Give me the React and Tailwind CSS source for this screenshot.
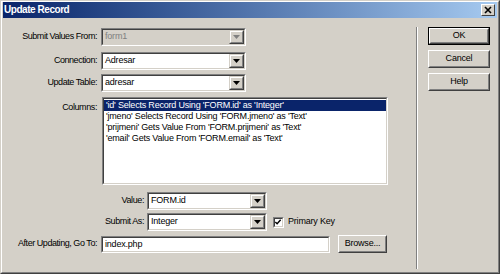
import * as React from 'react'

const FONT = { fontFamily: '"Liberation Sans", Arial, sans-serif' }

const columns = [
  "'id' Selects Record Using 'FORM.id' as 'Integer'",
  "'jmeno' Selects Record Using 'FORM.jmeno' as 'Text'",
  "'prijmeni' Gets Value From 'FORM.prijmeni' as 'Text'",
  "'email' Gets Value From 'FORM.email' as 'Text'",
]

export default function App() {
  return (
    <div
      style={FONT}
      className="h-[274px] w-[500px] border border-t-[#d4d0c8] border-l-[#d4d0c8] border-b-[#404040] border-r-[#404040] bg-[#d4d0c8] text-[9px] tracking-[-0.2px] text-black"
    >
      <div className="flex h-full flex-col border border-t-white border-l-white border-b-[#808080] border-r-[#808080] px-[1px]">
        <div className="flex h-[16px] shrink-0 items-center justify-between bg-gradient-to-r from-[#0a246a] to-[#a6caf0] pl-[1px] pr-[2px]">
          <span className="text-[10px] font-bold leading-none tracking-[-0.45px] text-white">Update Record</span>
          <CloseButton />
        </div>

        <div className="flex flex-1">
          <div className="w-[413px] pt-[10px]">
            <Row label="Submit Values From:">
              <Select value="form1" className="w-[145px]" disabled />
            </Row>
            <Row label="Connection:" className="mt-[6px]">
              <Select value="Adresar" className="w-[145px]" />
            </Row>
            <Row label="Update Table:" className="mt-[4px]">
              <Select value="adresar" className="w-[145px]" />
            </Row>

            <div className="mt-[5px] flex items-start">
              <span className="w-[94px] pt-[4px] text-right tracking-[-0.4px]">Columns:</span>
              <div className="ml-[5px] h-[88px] w-[286px] border border-t-[#808080] border-l-[#808080] border-b-white border-r-white">
                <div className="h-full border border-t-[#404040] border-l-[#404040] border-b-[#d4d0c8] border-r-[#d4d0c8] bg-white pt-[1px]">
                  {columns.map((text, i) => (
                    <div
                      key={text}
                      className={`h-[11px] whitespace-nowrap pl-[2px] leading-[11px] ${i === 0 ? 'bg-[#0a246a] text-white' : ''}`}
                    >
                      {text}
                    </div>
                  ))}
                </div>
              </div>
            </div>

            <div className="mt-[7px] flex items-center">
              <span className="w-[141px] text-right tracking-[-0.4px]">Value:</span>
              <Select value="FORM.id" className="ml-[3px] w-[120px]" />
            </div>
            <div className="mt-[3px] flex items-center">
              <span className="w-[141px] text-right tracking-[-0.4px]">Submit As:</span>
              <Select value="Integer" className="ml-[3px] w-[120px]" />
              <Checkbox />
              <span className="ml-[4px]">Primary Key</span>
            </div>

            <Row label="After Updating, Go To:" className="mt-[4px]">
              <Sunken className="h-[17px] w-[229px] bg-white">
                <span className="pl-[2px] leading-[13px]">index.php</span>
              </Sunken>
              <Button className="ml-[8px] w-[49px]">Browse...</Button>
            </Row>
          </div>

          <div className="mt-[9px] mb-[3px] w-[2px] border-l border-r border-l-[#808080] border-r-white" />

          <div className="ml-[10px] flex flex-col gap-[5px] pt-[9px]">
            <Button className="w-[62px]" isDefault>OK</Button>
            <Button className="w-[62px]">Cancel</Button>
            <Button className="w-[62px]">Help</Button>
          </div>
        </div>
      </div>
    </div>
  )
}

function Row({ label, className = '', children }) {
  return (
    <div className={`flex items-center ${className}`}>
      <span className="w-[94px] whitespace-nowrap text-right tracking-[-0.45px]">{label}</span>
      <div className="ml-[4px] flex items-center">{children}</div>
    </div>
  )
}

function Sunken({ className = '', children }) {
  return (
    <div className={`border border-t-[#808080] border-l-[#808080] border-b-white border-r-white ${className}`}>
      <div className="flex h-full items-center border border-t-[#404040] border-l-[#404040] border-b-[#d4d0c8] border-r-[#d4d0c8]">
        {children}
      </div>
    </div>
  )
}

function Select({ value, className = '', disabled }) {
  return (
    <Sunken className={`h-[18px] ${disabled ? 'bg-[#d4d0c8]' : 'bg-white'} ${className}`}>
      <span className={`flex-1 pl-[2px] ${disabled ? 'text-[#808080]' : ''}`}>{value}</span>
      <div className="h-full w-[15px] border border-t-[#d4d0c8] border-l-[#d4d0c8] border-b-[#404040] border-r-[#404040]">
        <div className="flex h-full items-center justify-center border border-t-white border-l-white border-b-[#808080] border-r-[#808080] bg-[#d4d0c8]">
          <svg width="7" height="4" viewBox="0 0 7 4">
            <path d="M0 0h7L3.5 4z" fill={disabled ? '#808080' : '#000'} />
          </svg>
        </div>
      </div>
    </Sunken>
  )
}

function Checkbox() {
  return (
    <Sunken className="ml-[6px] h-[11px] w-[11px] bg-white">
      <svg width="9" height="9" viewBox="0 0 9 9" className="-ml-[1px]">
        <path d="M1.5 4l2 2 4-4.5" stroke="#000" strokeWidth="1.6" fill="none" />
      </svg>
    </Sunken>
  )
}

function Button({ className = '', isDefault, children }) {
  return (
    <div className={`h-[18px] ${isDefault ? 'border border-black' : ''} ${className}`}>
      <div className="h-full border border-t-white border-l-white border-b-[#404040] border-r-[#404040]">
        <div className="flex h-full items-center justify-center border border-t-[#d4d0c8] border-l-[#d4d0c8] border-b-[#808080] border-r-[#808080] bg-[#d4d0c8]">
          {children}
        </div>
      </div>
    </div>
  )
}

function CloseButton() {
  return (
    <div className="h-[12px] w-[14px] border border-t-white border-l-white border-b-[#404040] border-r-[#404040] bg-[#d4d0c8]">
      <svg width="12" height="10" viewBox="0 0 12 10">
        <path d="M3 2l6 6M9 2l-6 6" stroke="#000" strokeWidth="1.6" />
      </svg>
    </div>
  )
}
